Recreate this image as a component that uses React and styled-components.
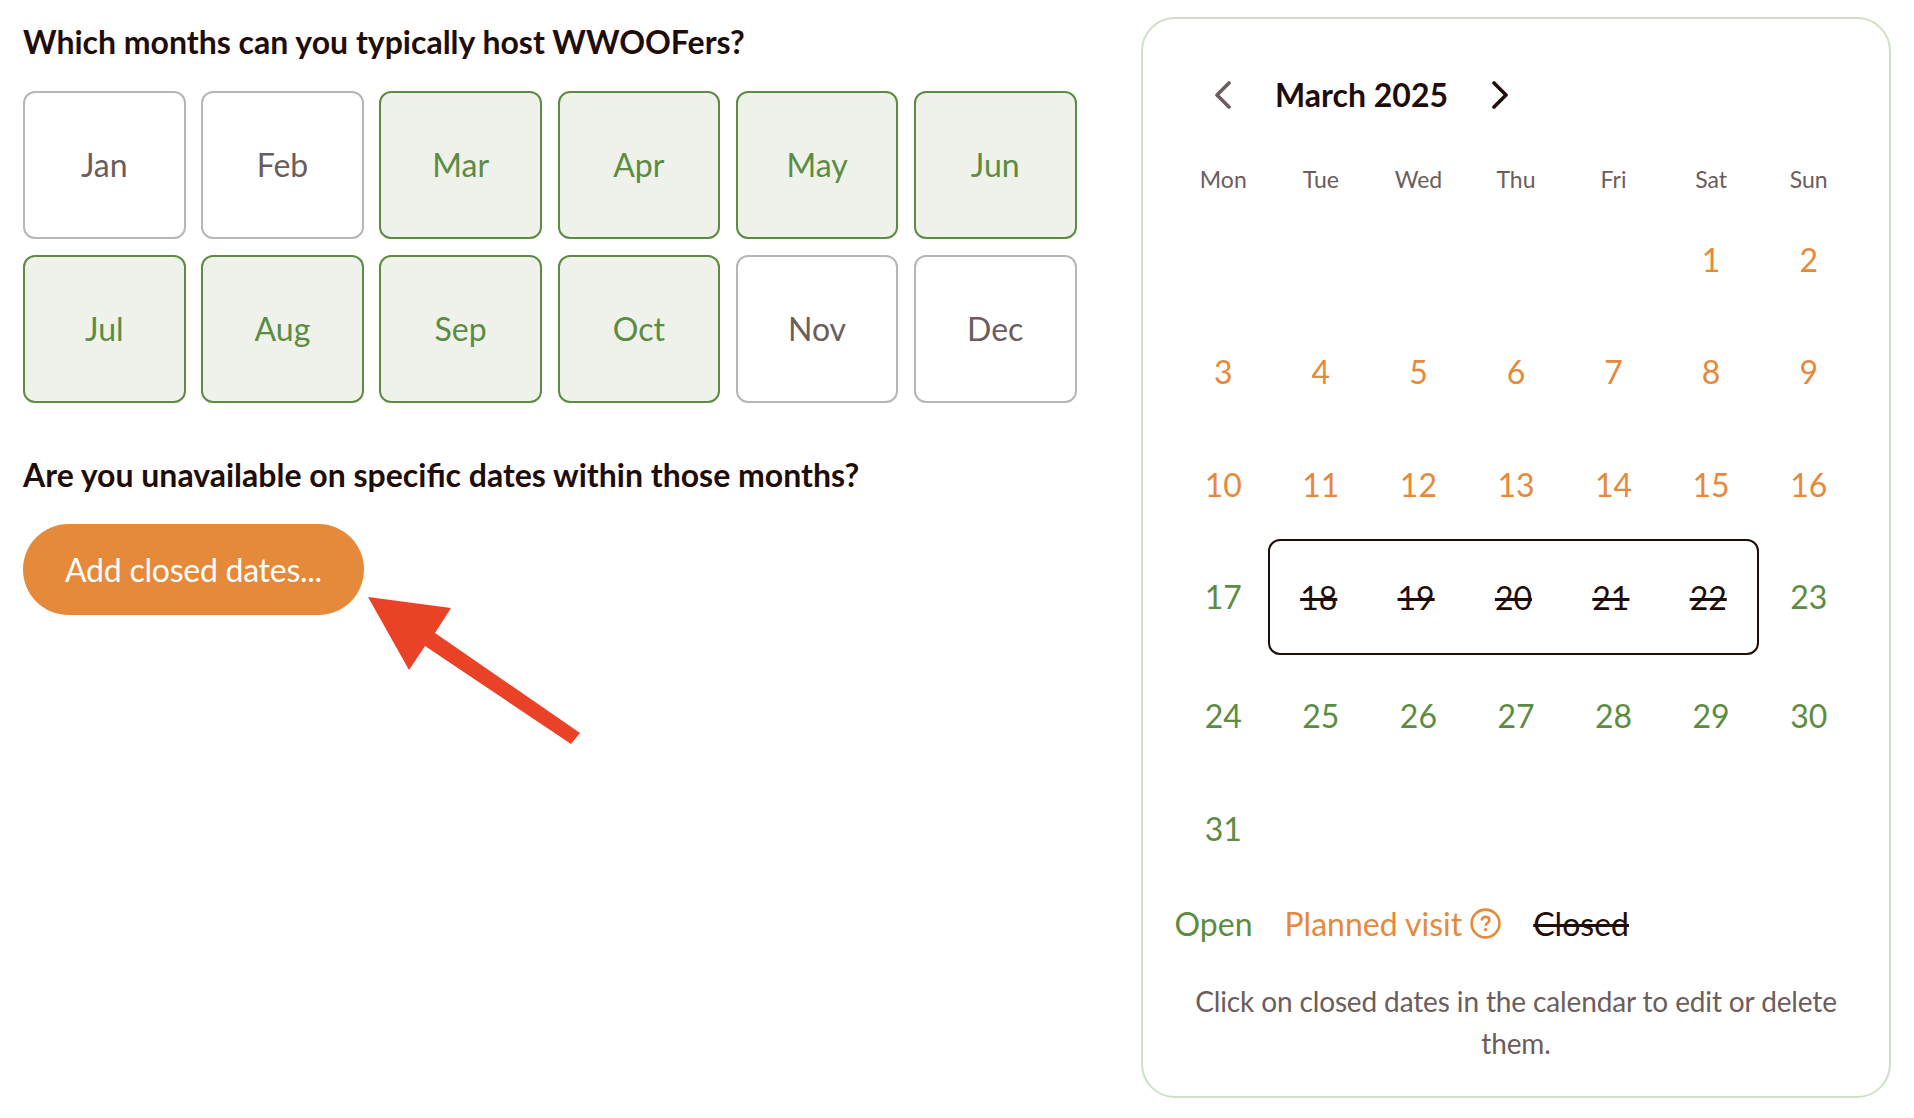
import React from "react";
import styled, { createGlobalStyle } from "styled-components";

const GREEN = "#5c8c42";
const ORANGE = "#e5893b";
const GRAY = "#6b5d5b";
const DARK = "#1f0d09";

const MONTHS = [
  ["Jan", false], ["Feb", false], ["Mar", true], ["Apr", true], ["May", true], ["Jun", true],
  ["Jul", true], ["Aug", true], ["Sep", true], ["Oct", true], ["Nov", false], ["Dec", false],
];

const WEEKDAYS = ["Mon", "Tue", "Wed", "Thu", "Fri", "Sat", "Sun"];

const App = () => {
  return (
    <Page>
      <GlobalStyle />
      <Form>
        <Question>Which months can you typically host WWOOFers?</Question>
        <MonthGrid>
          {MONTHS.map(([name, open]) => (
            <Month key={name} $open={open}>{name}</Month>
          ))}
        </MonthGrid>
        <Question>Are you unavailable on specific dates within those months?</Question>
        <ButtonWrap>
          <AddButton>Add closed dates...</AddButton>
          <Arrow width="212" height="147" viewBox="0 0 212 147">
            <polygon points="0,0 83,11 67,36 212,136 203,147 57,49 41,73" fill="#ea4226" />
          </Arrow>
        </ButtonWrap>
      </Form>

      <Card>
        <CalendarHeader>
          <NavIcon width="17" height="28" viewBox="0 0 17 28" $color={GRAY}>
            <polyline points="15,2 3,14 15,26" />
          </NavIcon>
          <MonthTitle>March 2025</MonthTitle>
          <NavIcon width="17" height="28" viewBox="0 0 17 28" $color={DARK}>
            <polyline points="2,2 14,14 2,26" />
          </NavIcon>
        </CalendarHeader>

        <Weekdays>
          {WEEKDAYS.map((d) => <Weekday key={d}>{d}</Weekday>)}
        </Weekdays>

        <Week>
          <Day /><Day /><Day /><Day /><Day />
          <Day $color={ORANGE}>1</Day>
          <Day $color={ORANGE}>2</Day>
        </Week>
        <Week>
          {[3, 4, 5, 6, 7, 8, 9].map((d) => <Day key={d} $color={ORANGE}>{d}</Day>)}
        </Week>
        <Week>
          {[10, 11, 12, 13, 14, 15, 16].map((d) => <Day key={d} $color={ORANGE}>{d}</Day>)}
        </Week>
        <ClosedWeek>
          <Day $color={GREEN}>17</Day>
          <ClosedRange>
            {[18, 19, 20, 21, 22].map((d) => <ClosedDay key={d}>{d}</ClosedDay>)}
          </ClosedRange>
          <Day $color={GREEN}>23</Day>
        </ClosedWeek>
        <Week>
          {[24, 25, 26, 27, 28, 29, 30].map((d) => <Day key={d} $color={GREEN}>{d}</Day>)}
        </Week>
        <Week>
          <Day $color={GREEN}>31</Day>
        </Week>

        <Legend>
          <LegendItem $color={GREEN}>Open</LegendItem>
          <LegendItem $color={ORANGE}>
            Planned visit
            <HelpIcon width="31" height="31" viewBox="0 0 31 31">
              <circle cx="15.5" cy="15.5" r="13.9" />
              <path d="M11.8 12.4c0-2.2 1.6-3.5 3.8-3.5s3.7 1.3 3.7 3.3c0 2.6-3.7 2.9-3.7 5.6" />
              <circle className="dot" cx="15.6" cy="21.6" r="1.7" />
            </HelpIcon>
          </LegendItem>
          <LegendItem $color={DARK} $struck>Closed</LegendItem>
        </Legend>

        <Hint>Click on closed dates in the calendar to edit or delete them.</Hint>
      </Card>
    </Page>
  );
};

export default App;

const GlobalStyle = createGlobalStyle`
  body {
    margin: 0;
    background: #fff;
    font-family: Lato, "Open Sans", sans-serif;
  }
`;

const Page = styled.div`
  width: 1914px;
  height: 1118px;
  display: flex;
  align-items: flex-start;
  box-sizing: border-box;
  padding: 17px 23px 0 23px;
  justify-content: space-between;
`;

const Form = styled.div`
  width: 1054px;
  padding-top: 4px;
`;

const Question = styled.h2`
  margin: 0;
  font-size: 32px;
  line-height: 42px;
  font-weight: 700;
  color: ${DARK};
`;

const MonthGrid = styled.div`
  display: grid;
  grid-template-columns: repeat(6, 162.6px);
  grid-auto-rows: 147.5px;
  column-gap: 15.6px;
  row-gap: 16.5px;
  margin: 28px 0 51.5px;
`;

const Month = styled.div`
  display: flex;
  align-items: center;
  justify-content: center;
  box-sizing: border-box;
  border-radius: 12px;
  font-size: 32px;
  border: 2px solid ${(p) => (p.$open ? GREEN : "#b9b5b4")};
  background: ${(p) => (p.$open ? "#eff2eb" : "#fff")};
  color: ${(p) => (p.$open ? GREEN : GRAY)};
`;

const ButtonWrap = styled.div`
  position: relative;
  margin-top: 28px;
`;

const AddButton = styled.button`
  width: 341px;
  height: 91px;
  border: 0;
  padding: 0;
  border-radius: 46px;
  background: ${ORANGE};
  color: #fff;
  font-family: inherit;
  font-size: 32px;
  letter-spacing: -0.25px;
`;

const Arrow = styled.svg`
  position: absolute;
  left: 345px;
  top: 73px;
`;

const Card = styled.div`
  width: 750px;
  height: 1081px;
  box-sizing: border-box;
  border: 2px solid #cfdfc9;
  border-radius: 34px;
  padding: 47px 31.5px 0;
`;

const CalendarHeader = styled.div`
  display: flex;
  align-items: center;
  height: 56px;
  padding-left: 39.5px;
`;

const NavIcon = styled.svg`
  margin-top: 1px;
  fill: none;
  stroke: ${(p) => p.$color};
  stroke-width: 3.6;
  stroke-linecap: round;
  stroke-linejoin: round;
`;

const MonthTitle = styled.div`
  font-size: 32px;
  font-weight: 700;
  color: ${DARK};
  margin: 0 44px;
`;

const Weekdays = styled.div`
  display: grid;
  grid-template-columns: repeat(7, 1fr);
  height: 40px;
  align-items: center;
  margin: 37px 0 4px;
`;

const Weekday = styled.div`
  text-align: center;
  font-size: 23px;
  color: ${GRAY};
`;

const Week = styled.div`
  display: grid;
  grid-template-columns: repeat(7, 1fr);
  grid-auto-rows: 112.5px;
  align-items: center;
`;

const ClosedWeek = styled(Week)`
  margin-bottom: 6.5px;
`;

const Day = styled.div`
  text-align: center;
  font-size: 32px;
  color: ${(p) => p.$color};
`;

const ClosedRange = styled.div`
  grid-column: 2 / 7;
  display: grid;
  grid-template-columns: repeat(5, 1fr);
  align-items: center;
  height: 116px;
  box-sizing: border-box;
  margin: 0 1px 0 -4px;
  padding-top: 2px;
  border: 2px solid ${DARK};
  border-radius: 12px;
`;

const ClosedDay = styled.div`
  text-align: center;
  font-size: 32px;
  color: ${DARK};
  text-decoration: line-through;
`;

const Legend = styled.div`
  display: flex;
  align-items: center;
  height: 42px;
  margin-top: 18px;
  gap: 32px;
`;

const LegendItem = styled.div`
  display: flex;
  align-items: center;
  gap: 8px;
  font-size: 32px;
  color: ${(p) => p.$color};
  text-decoration: ${(p) => (p.$struck ? "line-through" : "none")};
`;

const HelpIcon = styled.svg`
  fill: none;
  stroke: ${ORANGE};
  stroke-width: 2.6;

  .dot {
    fill: ${ORANGE};
    stroke: none;
  }
`;

const Hint = styled.p`
  margin: 35px 0 0;
  text-align: center;
  font-size: 28px;
  line-height: 42px;
  letter-spacing: -0.13px;
  color: ${GRAY};
`;
